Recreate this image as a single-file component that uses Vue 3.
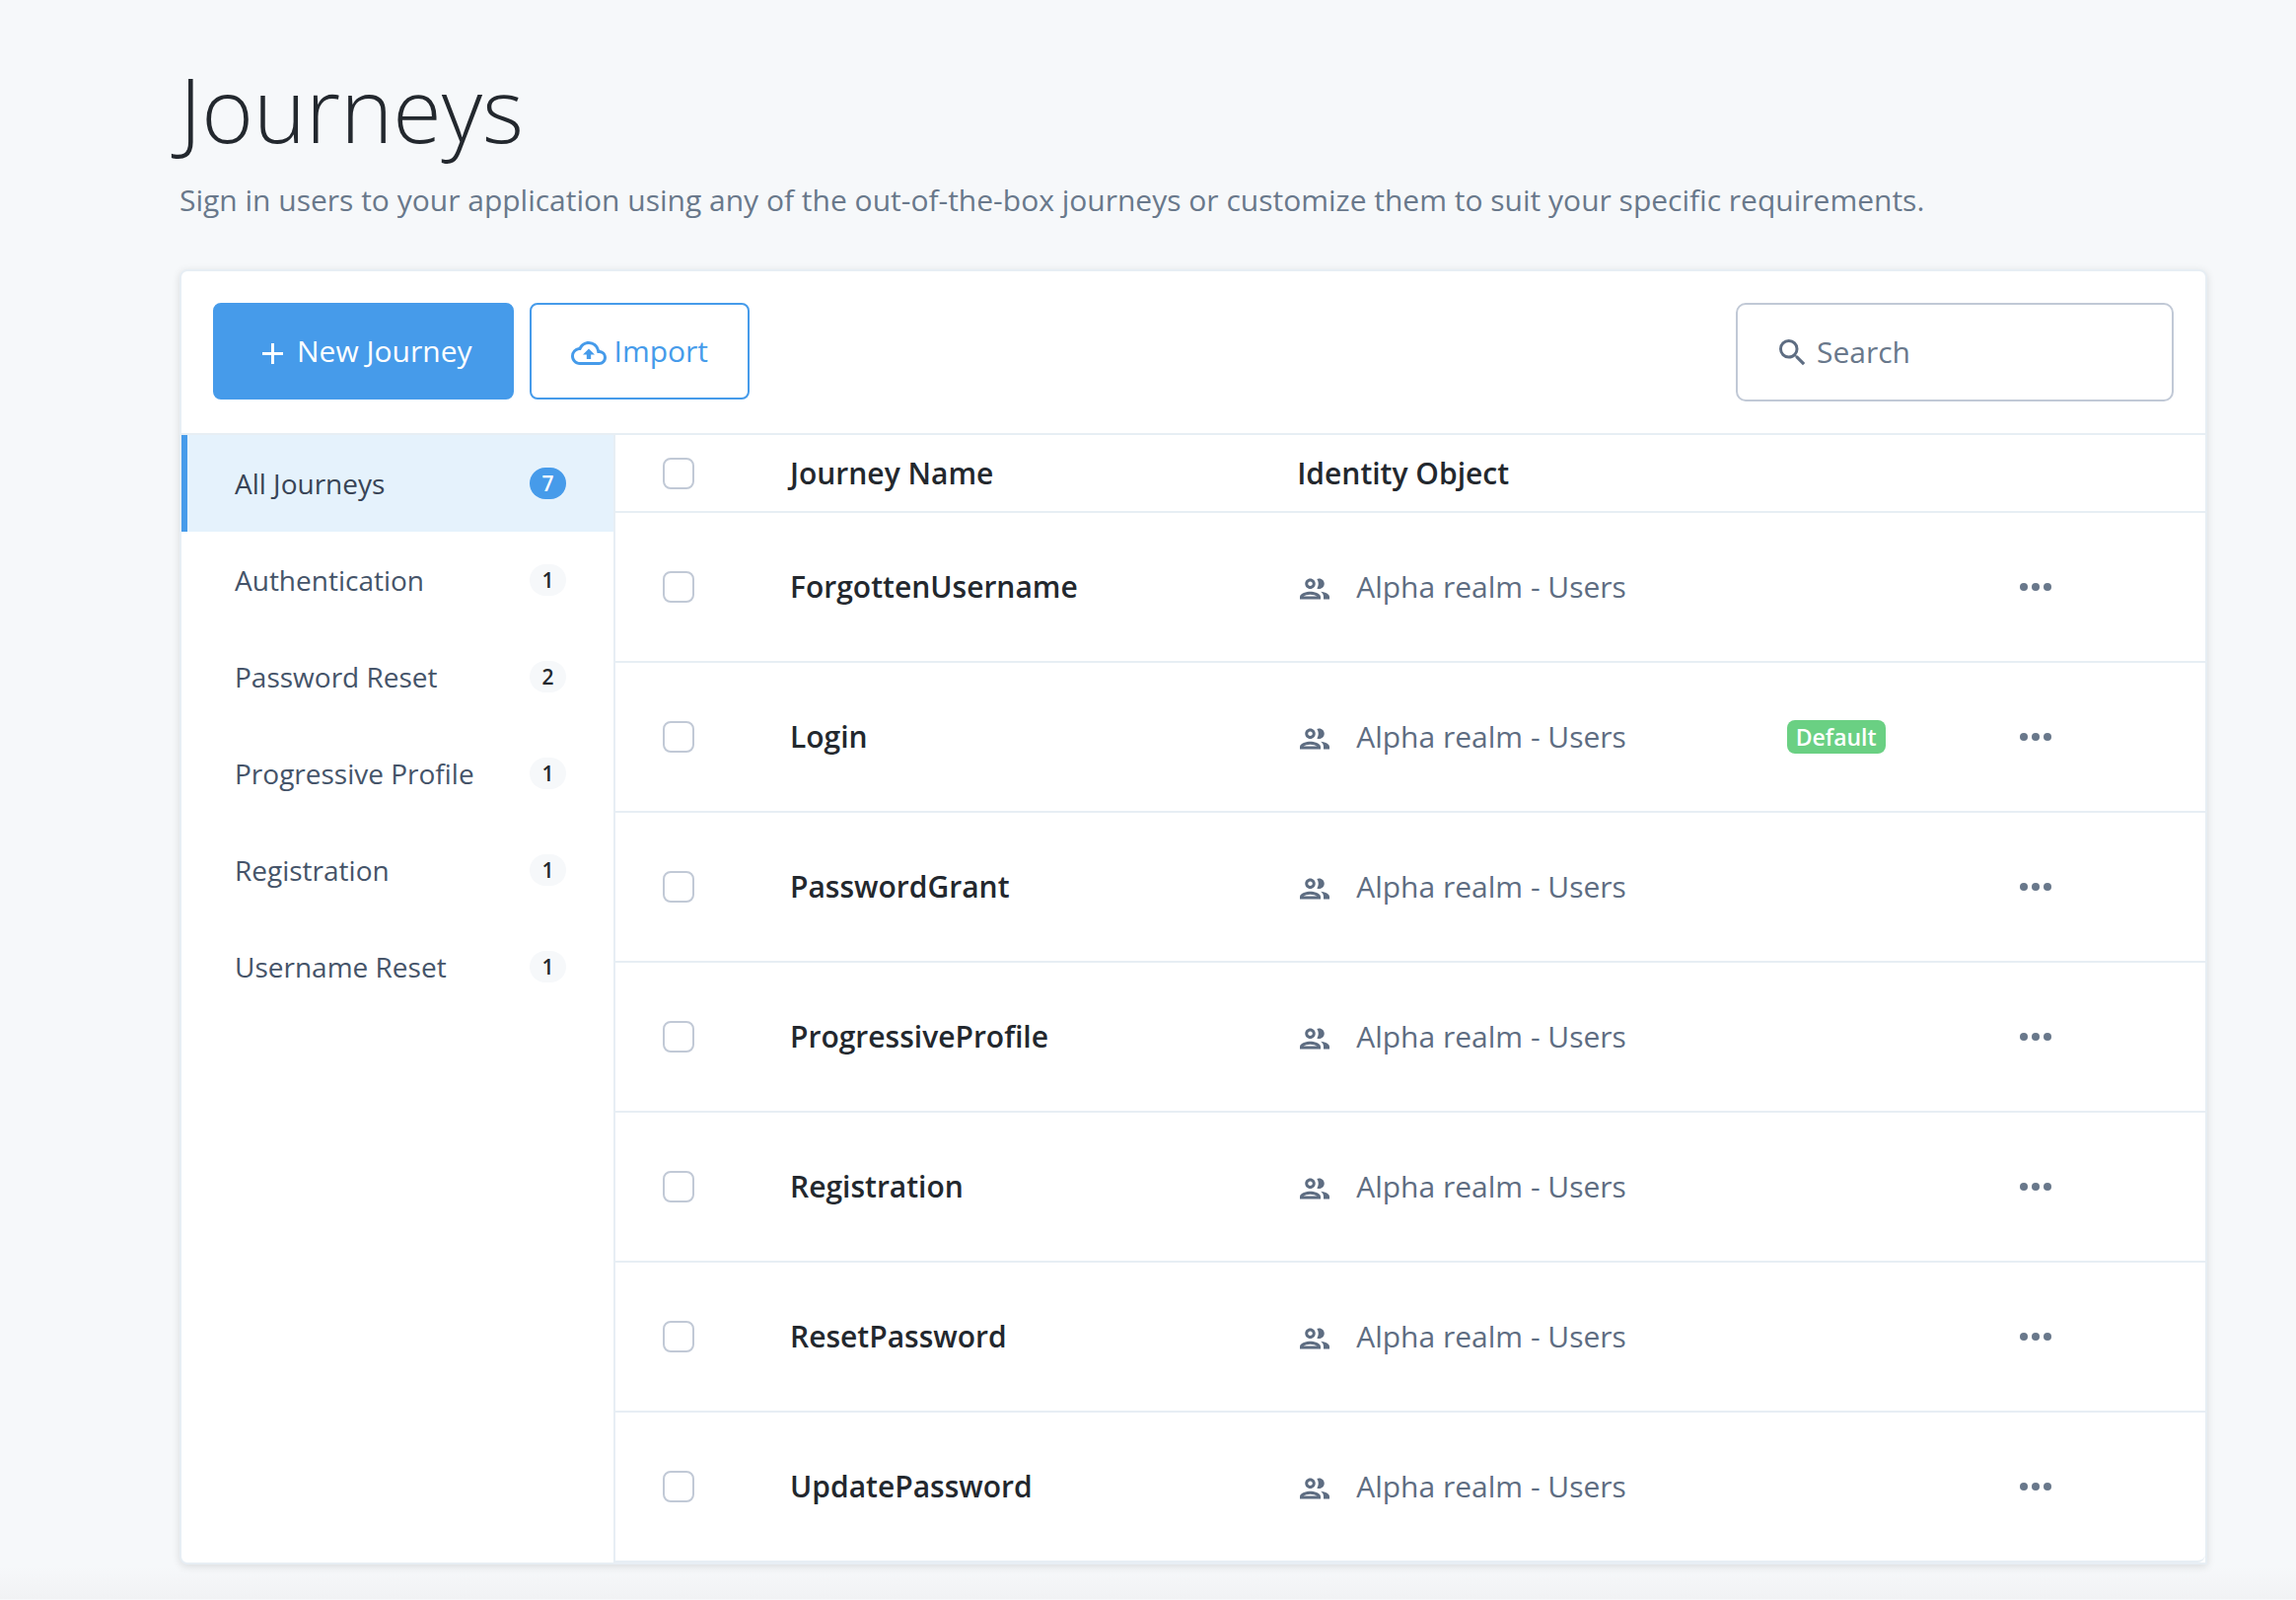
<script setup>
import { ref } from 'vue'

const categories = [
  { name: 'All Journeys', count: 7 },
  { name: 'Authentication', count: 1 },
  { name: 'Password Reset', count: 2 },
  { name: 'Progressive Profile', count: 1 },
  { name: 'Registration', count: 1 },
  { name: 'Username Reset', count: 1 },
]
const active = ref('All Journeys')

const journeys = [
  { name: 'ForgottenUsername' },
  { name: 'Login', isDefault: true },
  { name: 'PasswordGrant' },
  { name: 'ProgressiveProfile' },
  { name: 'Registration' },
  { name: 'ResetPassword' },
  { name: 'UpdatePassword' },
]
const selected = ref([])
const query = ref('')

function toggleAll(event) {
  selected.value = event.target.checked ? journeys.map((j) => j.name) : []
}
</script>

<template>
  <main class="page">
    <header class="heading">
      <h1>Journeys</h1>
      <p>Sign in users to your application using any of the out-of-the-box journeys or customize them to suit your specific requirements.</p>
    </header>

    <section class="card">
      <div class="toolbar">
        <button type="button" class="btn primary">
          <svg class="icon-plus" viewBox="0 0 21 21" aria-hidden="true"><path d="M9 0h3v9h9v3h-9v9H9v-9H0V9h9z" /></svg>
          New Journey
        </button>
        <button type="button" class="btn outline">
          <svg class="icon-cloud" viewBox="0 0 24 24" aria-hidden="true"><path d="M19.35 10.04A7.49 7.49 0 0 0 12 4C9.11 4 6.6 5.64 5.35 8.04A5.994 5.994 0 0 0 0 14c0 3.31 2.69 6 6 6h13c2.76 0 5-2.24 5-5 0-2.64-2.05-4.78-4.65-4.96zM19 18H6c-2.21 0-4-1.79-4-4 0-2.05 1.53-3.76 3.56-3.97l1.07-.11.5-.95A5.469 5.469 0 0 1 12 6c2.62 0 4.88 1.86 5.39 4.43l.3 1.5 1.53.11A2.98 2.98 0 0 1 22 15c0 1.65-1.35 3-3 3zM8 13h2.55v3h2.9v-3H16l-4-4z" /></svg>
          Import
        </button>
        <label class="search">
          <svg class="icon-search" viewBox="0 0 18 18" aria-hidden="true"><path d="M12.5 11h-.79l-.28-.27A6.471 6.471 0 0 0 13 6.5 6.5 6.5 0 1 0 6.5 13c1.61 0 3.09-.59 4.23-1.57l.27.28v.79l5 4.99L17.49 16l-4.99-5zm-6 0C4.01 11 2 8.99 2 6.5S4.01 2 6.5 2 11 4.01 11 6.5 8.99 11 6.5 11z" /></svg>
          <input v-model="query" type="search" placeholder="Search" aria-label="Search" />
        </label>
      </div>

      <div class="content">
        <nav class="sidebar">
          <button
            v-for="c in categories"
            :key="c.name"
            type="button"
            class="category"
            :class="{ active: c.name === active }"
            @click="active = c.name"
          >
            <span>{{ c.name }}</span>
            <span class="count">{{ c.count }}</span>
          </button>
        </nav>

        <table class="journeys">
          <colgroup>
            <col class="col-check" />
            <col class="col-name" />
            <col class="col-identity" />
            <col class="col-status" />
            <col />
          </colgroup>
          <thead>
            <tr>
              <th><input type="checkbox" class="check" aria-label="Select all journeys" @change="toggleAll" /></th>
              <th scope="col">Journey Name</th>
              <th scope="col">Identity Object</th>
              <th></th>
              <th></th>
            </tr>
          </thead>
          <tbody>
            <tr v-for="j in journeys" :key="j.name">
              <td><input v-model="selected" type="checkbox" class="check" :value="j.name" :aria-label="`Select ${j.name}`" /></td>
              <td class="name">{{ j.name }}</td>
              <td>
                <div class="identity">
                  <svg class="icon-people" viewBox="0 0 24 24" aria-hidden="true"><path d="M9 13.75c-2.34 0-7 1.17-7 3.5V19h14v-1.75c0-2.33-4.66-3.5-7-3.5zM4.34 17c.84-.58 2.87-1.25 4.66-1.25s3.82.67 4.66 1.25H4.34zM9 12c1.93 0 3.5-1.57 3.5-3.5S10.93 5 9 5 5.5 6.57 5.5 8.5 7.07 12 9 12zm0-5c.83 0 1.5.67 1.5 1.5S9.83 10 9 10s-1.5-.67-1.5-1.5S8.17 7 9 7zm7.04 6.81c1.16.84 1.96 1.96 1.96 3.44V19h4v-1.75c0-2.02-3.5-3.17-5.96-3.44zM15 12c1.93 0 3.5-1.57 3.5-3.5S16.93 5 15 5c-.54 0-1.04.13-1.5.35.63.89 1 1.98 1 3.15s-.37 2.26-1 3.15c.46.22.96.35 1.5.35z" /></svg>
                  Alpha realm - Users
                </div>
              </td>
              <td class="status"><span v-if="j.isDefault" class="tag">Default</span></td>
              <td class="actions">
                <button type="button" class="more" :aria-label="`Actions for ${j.name}`">
                  <svg class="icon-more" viewBox="0 0 34 8" aria-hidden="true"><circle cx="5" cy="4" r="4" /><circle cx="17" cy="4" r="4" /><circle cx="29" cy="4" r="4" /></svg>
                </button>
              </td>
            </tr>
          </tbody>
        </table>
      </div>
    </section>
  </main>
</template>

<style>
body {
  margin: 0;
  background: #f6f8fa;
}
</style>

<style scoped>
.page {
  box-sizing: border-box;
  padding: 54px 90px 35px 182px;
  background: linear-gradient(to top, #f1f2f4, #f6f8fa 32px);
  color: #23282e;
  font-family: "Open Sans", sans-serif;
  font-size: 30px;
  line-height: 44px;
}
h1 {
  margin: 0;
  font-size: 90px;
  font-weight: 300;
  line-height: 112px;
}
.heading p {
  margin: 15px 0 48px;
  color: #69788b;
}
svg {
  display: block;
  flex: none;
  fill: currentColor;
}
button {
  font: inherit;
  cursor: pointer;
}
.card {
  border: 2px solid #e7eef4;
  border-radius: 8px 8px 0 8px;
  background: #fff;
  box-shadow: 0 2px 8px rgba(0, 0, 0, 0.12);
}
.toolbar {
  display: flex;
  align-items: flex-start;
  gap: 16px;
  padding: 32px;
  border-bottom: 2px solid #e7eef4;
}
.btn {
  display: flex;
  align-items: center;
  height: 98px;
  padding: 0 40px;
  border: 2px solid #469bea;
  border-radius: 8px;
}
.btn svg {
  margin-top: 4px;
}
.primary {
  gap: 14px;
  padding-left: 48px;
  background: #469bea;
  color: #fff;
}
.outline {
  gap: 8px;
  background: #fff;
  color: #469bea;
}
.icon-plus {
  width: 21px;
  height: 21px;
}
.icon-cloud {
  width: 36px;
  height: 36px;
}
.search {
  display: flex;
  box-sizing: border-box;
  align-items: center;
  gap: 11px;
  width: 444px;
  height: 100px;
  margin-left: auto;
  padding: 0 42px;
  border: 2px solid #c1c9d6;
  border-radius: 10px;
  color: #5e6d82;
}
.icon-search {
  width: 27px;
  height: 27px;
}
.search input {
  flex: 1;
  min-width: 0;
  padding: 0;
  border: 0;
  outline: 0;
  background: transparent;
  color: #23282e;
  font: inherit;
}
.search input::placeholder {
  color: #69788b;
  opacity: 1;
}
.content {
  display: flex;
}
.sidebar {
  flex: none;
  width: 438px;
  border-right: 2px solid #e7eef4;
}
.category {
  display: flex;
  align-items: center;
  justify-content: space-between;
  width: 100%;
  height: 98px;
  padding: 0 48px;
  border: 0;
  border-left: 6px solid transparent;
  background: none;
  color: #455469;
  font-size: 28px;
}
.category.active {
  border-left-color: #469bea;
  background: #e5f2fc;
  color: #384456;
}
.count {
  box-sizing: border-box;
  min-width: 37px;
  border-radius: 16px;
  background: #f6f8fa;
  color: #23282e;
  font-size: 21px;
  font-weight: 600;
  line-height: 32px;
  text-align: center;
}
.active .count {
  background: #469bea;
  color: #fff;
}
.journeys {
  flex: 1;
  min-width: 0;
  border-spacing: 0;
  table-layout: fixed;
}
.col-check {
  width: 129px;
}
.col-name {
  width: 31.9%;
}
.col-identity {
  width: 30.8%;
}
.col-status {
  width: 14.6%;
}
th,
td {
  box-sizing: border-box;
  height: 152px;
  padding: 0 0 0 48px;
  border-bottom: 2px solid #e7eef4;
  font-weight: 400;
  text-align: left;
  vertical-align: middle;
}
th {
  height: 79px;
  font-weight: 600;
}
.name {
  font-weight: 600;
}
tbody tr:last-child td:last-child {
  border-bottom-right-radius: 8px;
}
.check {
  display: block;
  width: 32px;
  height: 32px;
  margin: 0;
  border: 2px solid #c1c9d6;
  border-radius: 8px;
  background: #fff;
  appearance: none;
}
.check:checked {
  border-color: #469bea;
  background: #469bea;
}
.identity {
  display: flex;
  align-items: center;
  gap: 24px;
  color: #5e6d82;
}
.icon-people {
  width: 36px;
  height: 36px;
  margin-top: 4px;
}
.tag {
  display: block;
  width: fit-content;
  padding: 0 9px;
  border-radius: 8px;
  background: #6ad083;
  color: #fff;
  font-size: 23px;
  font-weight: 600;
  line-height: 34px;
}
.more {
  display: block;
  padding: 8px 0;
  border: 0;
  background: none;
  color: #69788b;
}
.icon-more {
  width: 34px;
  height: 8px;
}
</style>
